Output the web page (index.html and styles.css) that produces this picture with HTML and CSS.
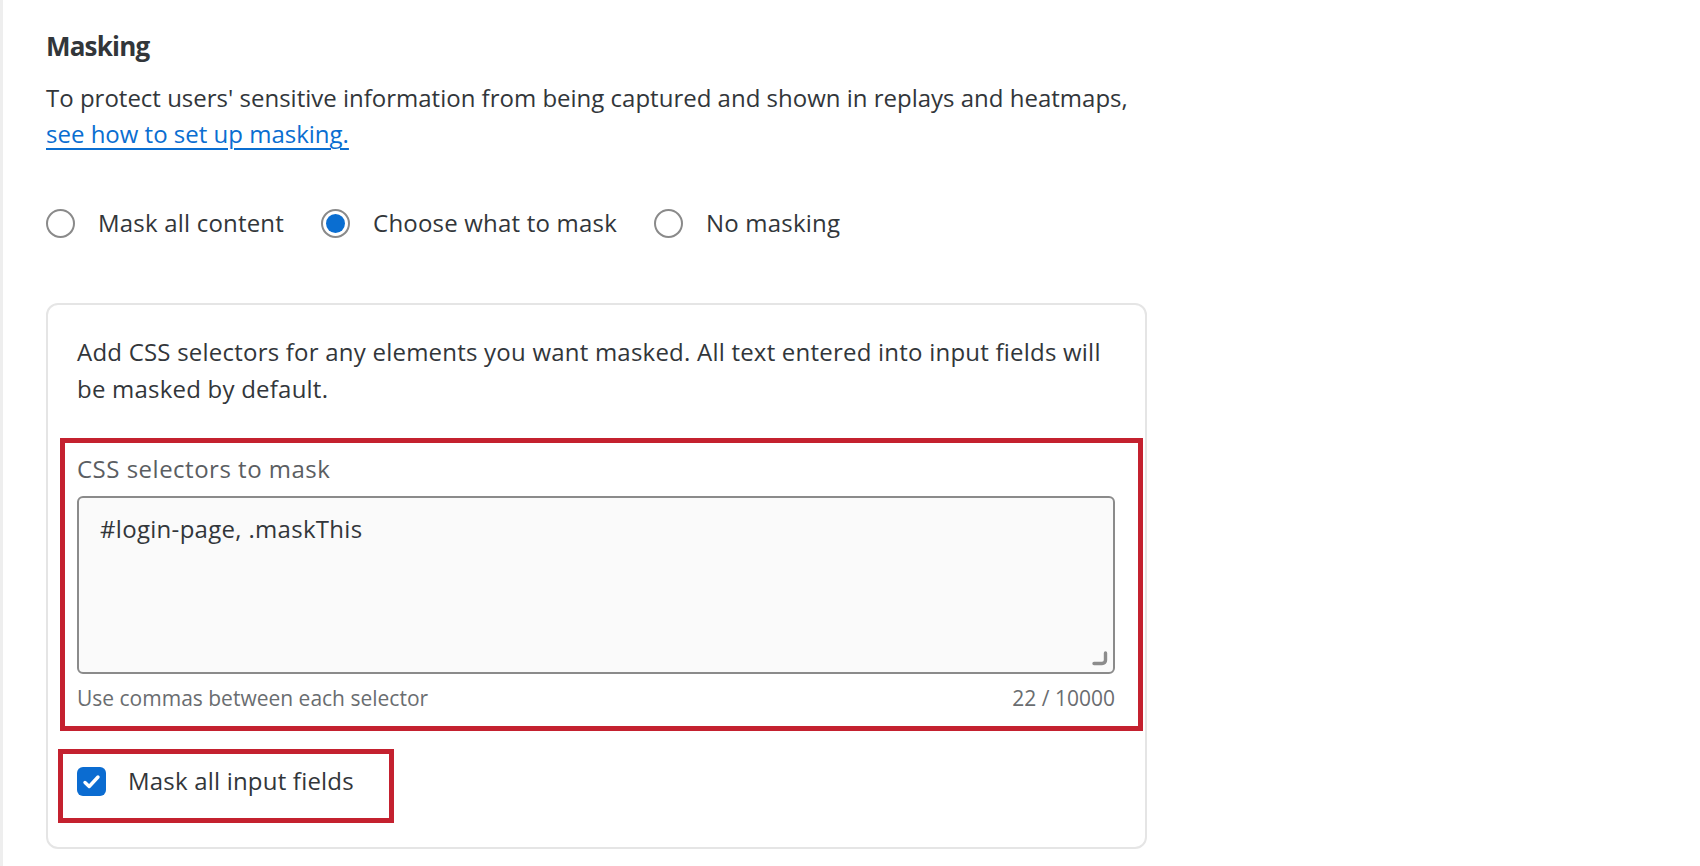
FILE: index.html
```html
<!DOCTYPE html>
<html lang="en">
<head>
<meta charset="utf-8">
<title>Masking</title>
<link rel="stylesheet" href="styles.css">
</head>
<body>
<div class="page">
  <section class="panel">
    <h2 class="title">Masking</h2>
    <p class="intro">To protect users' sensitive information from being captured and shown in replays and heatmaps, <a class="link" href="#">see how to set up masking.</a></p>

    <div class="radios">
      <label class="radio">
        <span class="radio-circle"></span>
        <span class="radio-text">Mask all content</span>
      </label>
      <label class="radio">
        <span class="radio-circle selected"><span class="radio-dot"></span></span>
        <span class="radio-text">Choose what to mask</span>
      </label>
      <label class="radio">
        <span class="radio-circle"></span>
        <span class="radio-text">No masking</span>
      </label>
    </div>

    <div class="card">
      <p class="card-text">Add CSS selectors for any elements you want masked. All text entered into input fields will be masked by default.</p>

      <div class="highlight field">
        <div class="field-label">CSS selectors to mask</div>
        <div class="textarea-wrap">
          <textarea class="textarea">#login-page, .maskThis</textarea>
          <svg class="grip" width="17" height="15" viewBox="0 0 17 15"><path d="M14.5 2 V9 Q14.5 12.5 11 12.5 H3" fill="none" stroke="#8c8c8c" stroke-width="3.4" stroke-linecap="round" stroke-linejoin="round"/></svg>
        </div>
        <div class="field-help">
          <span>Use commas between each selector</span>
          <span>22 / 10000</span>
        </div>
      </div>

      <div class="highlight check-box">
        <span class="checkbox">
          <svg width="29" height="29" viewBox="0 0 29 29"><path d="M8 15.5 L12.2 19.5 L21 10" fill="none" stroke="#ffffff" stroke-width="3.4" stroke-linecap="round" stroke-linejoin="round"/></svg>
        </span>
        <span class="check-text">Mask all input fields</span>
      </div>
    </div>
  </section>
</div>
</body>
</html>
```

FILE: styles.css
```css
html, body {
  margin: 0;
  padding: 0;
  background: #ffffff;
}

body {
  font-family: "Open Sans", "Noto Sans", sans-serif;
  color: #32363a;
}

.page {
  min-height: 866px;
  box-sizing: border-box;
  border-left: 3px solid #eeeeee;
  padding: 26px 0 0 43px;
}

.panel {
  width: 1101px;
}

.title {
  margin: 0;
  font-size: 26px;
  line-height: 40px;
  font-weight: 700;
  letter-spacing: -0.8px;
  color: #32363a;
}

.intro {
  margin: 14px 0 0;
  font-size: 24px;
  line-height: 36px;
}

.link {
  color: #0a6ed1;
  text-decoration: underline;
  text-decoration-thickness: 1.5px;
  text-underline-offset: 5px;
}

.radios {
  display: flex;
  align-items: center;
  margin-top: 53px;
  height: 36px;
}

.radio {
  display: flex;
  align-items: center;
  margin-right: 37px;
  font-size: 24px;
  line-height: 36px;
  letter-spacing: 0.2px;
}

.radio-circle {
  width: 29px;
  height: 29px;
  box-sizing: border-box;
  border: 2px solid #8a8a8a;
  border-radius: 50%;
  display: flex;
  align-items: center;
  justify-content: center;
  margin-right: 23px;
  background: #ffffff;
}

.radio-dot {
  width: 19px;
  height: 19px;
  border-radius: 50%;
  background: #0a6ed1;
}

.card {
  margin-top: 62px;
  border: 2px solid #e5e5e5;
  border-radius: 12px;
  padding: 28px 29px 24px 29px;
}

.card-text {
  margin: 0;
  font-size: 24px;
  line-height: 37px;
  letter-spacing: 0.22px;
}

.highlight {
  border: 5px solid #c4212f;
}

.field {
  margin: 31px -27px 0 -17px;
  padding: 8px 23px 12px 12px;
}

.field-label {
  font-size: 24px;
  line-height: 36px;
  letter-spacing: 0.5px;
  color: #5b5e62;
}

.textarea-wrap {
  position: relative;
  margin-top: 9px;
}

.textarea {
  display: block;
  width: 100%;
  height: 178px;
  box-sizing: border-box;
  margin: 0;
  border: 2px solid #8b8b8b;
  border-radius: 6px;
  background: #fafafa;
  padding: 13px 21px 12px;
  font-family: "Open Sans", "Noto Sans", sans-serif;
  font-size: 24px;
  line-height: 36px;
  letter-spacing: 0.3px;
  color: #32363a;
  resize: none;
  outline: none;
}

.grip {
  position: absolute;
  right: 7px;
  bottom: 8px;
}

.field-help {
  display: flex;
  justify-content: space-between;
  margin-top: 9px;
  font-size: 21px;
  line-height: 31px;
  color: #6a6d70;
}

.check-box {
  display: inline-flex;
  align-items: center;
  margin: 18px 0 0 -19px;
  padding: 9px 35px 19px 14px;
}

.checkbox {
  width: 29px;
  height: 29px;
  border-radius: 6px;
  background: #0b6cd1;
  display: flex;
  margin-right: 22px;
}

.check-text {
  font-size: 24px;
  line-height: 36px;
  letter-spacing: 0.2px;
}
```
